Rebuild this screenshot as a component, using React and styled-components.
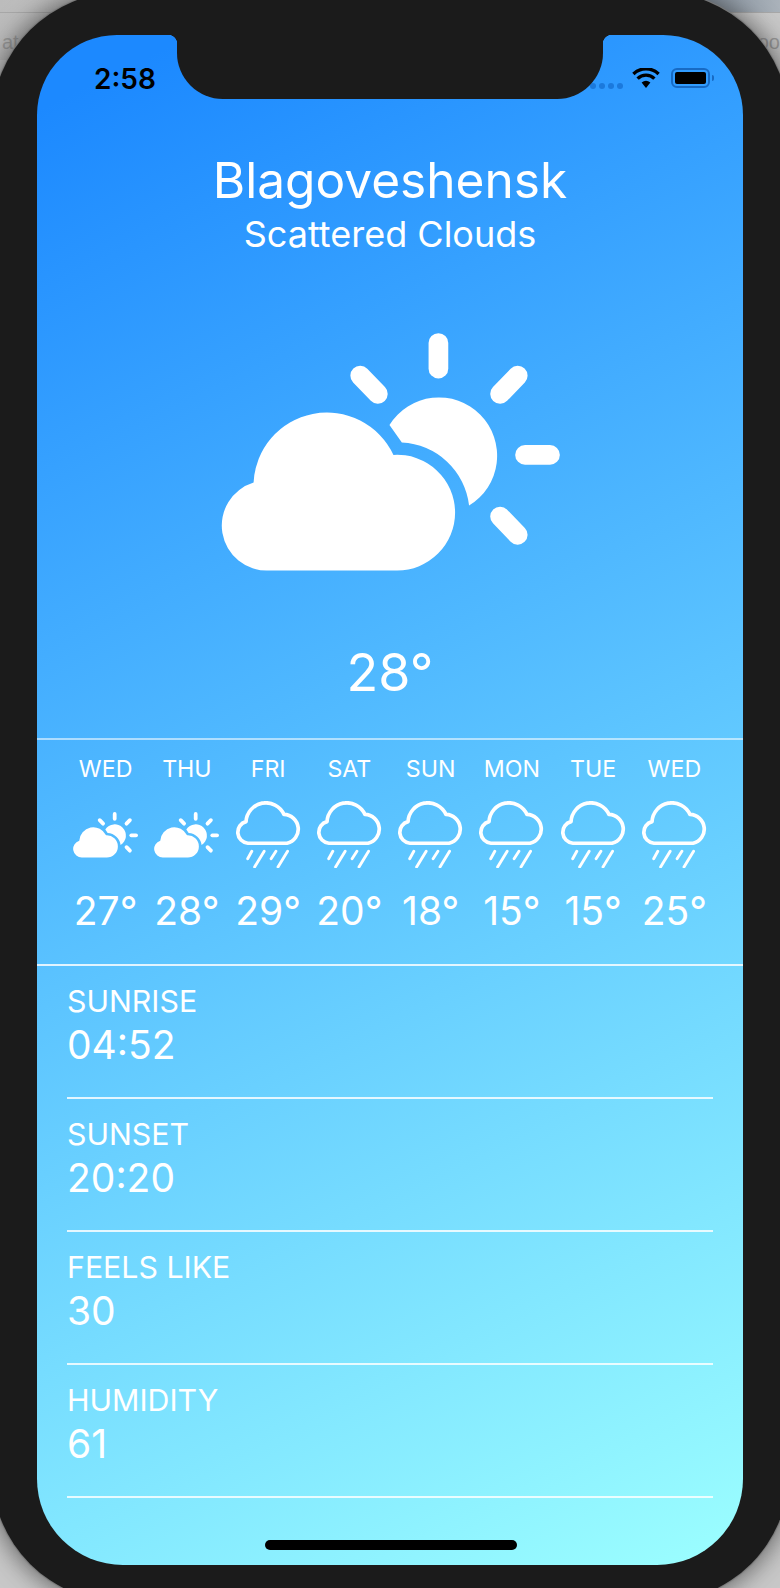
import React from "react";
import styled, { createGlobalStyle } from "styled-components";

const Global = createGlobalStyle`
  html, body { margin: 0; padding: 0; background: #c8c8c8; }
  body { font-family: Inter, "Noto Sans", sans-serif; }
`;

const Page = styled.div`
  position: relative;
  width: 780px;
  height: 1588px;
  overflow: hidden;
  display: flex;
  justify-content: center;
  align-items: flex-start;
  background: #c8c8c8;
`;

const Backdrop = styled.div`
  position: absolute;
  inset: 0 0 auto 0;
  height: 60px;
  display: flex;
  justify-content: space-between;
  align-items: flex-end;
  padding: 0 0 8px 2px;
  box-sizing: border-box;
  color: #9a9a9a;
  font: 400 20px/1 "Liberation Sans", sans-serif;
  background:
    linear-gradient(#a8a8a8, #a8a8a8) 0 12px / 100% 1px no-repeat,
    linear-gradient(90deg, transparent 78%, #7f8c9a 88%, #aab2ba 100%) 0 0 / 100% 12px no-repeat,
    linear-gradient(90deg, #bcbcbc, #d6d6d6 50%, #c8c8c8);
`;

const Frame = styled.div`
  position: relative;
  flex: 0 0 auto;
  width: 797px;
  height: 1610px;
  margin-top: -8.5px;
  padding: 43.5px 45.5px 0;
  box-sizing: border-box;
  background: #1b1b1b;
  border-radius: 130px;
  box-shadow: 0 0 1px 1px #777, 0 0 24px 4px rgba(40, 40, 40, 0.6);
`;

const Screen = styled.div`
  position: relative;
  height: 1530px;
  overflow: hidden;
  display: flex;
  flex-direction: column;
  color: #fff;
  background: linear-gradient(154deg, #1c89ff 4%, #9cffff 100%);
  border-radius: 80px 80px 86px 86px;
`;

const Notch = styled.div`
  position: absolute;
  top: 0;
  left: 140px;
  width: 426px;
  height: 64px;
  background: #1b1b1b;
  border-radius: 0 0 46px 46px;
  &::before, &::after {
    content: "";
    position: absolute;
    top: 0;
    width: 9px;
    height: 9px;
  }
  &::before {
    left: -9px;
    background: radial-gradient(circle at 0 100%, transparent 9px, #1b1b1b 9.5px);
  }
  &::after {
    right: -9px;
    background: radial-gradient(circle at 100% 100%, transparent 9px, #1b1b1b 9.5px);
  }
`;

const StatusBar = styled.div`
  height: 64px;
  flex: 0 0 auto;
  padding: 34px 33px 0 57px;
  box-sizing: border-box;
  display: flex;
  align-items: flex-start;
  justify-content: space-between;
`;

const Clock = styled.span`
  color: #000;
  font-size: 28px;
  font-weight: 600;
  line-height: 20px;
`;

const StatusIcons = styled.div`
  display: flex;
  align-items: flex-start;
  gap: 11px;
  margin-top: -1px;
`;

const Dots = styled.div`
  display: flex;
  gap: 3px;
  margin-top: 15px;
  margin-right: -2px;
`;

const Dot = styled.i`
  width: 6px;
  height: 6px;
  border-radius: 50%;
  background: #1b79dc;
`;

const Battery = styled.div`
  position: relative;
  width: 39px;
  height: 20px;
  box-sizing: border-box;
  border: 2px solid #176ac4;
  border-radius: 6px;
  padding: 2px;
  &::before {
    content: "";
    display: block;
    height: 100%;
    background: #000;
    border-radius: 2px;
  }
  &::after {
    content: "";
    position: absolute;
    right: -6px;
    top: 5px;
    width: 2px;
    height: 6px;
    background: #176ac4;
    border-radius: 0 3px 3px 0;
  }
`;

const City = styled.h1`
  margin: 52px 0 0;
  text-align: center;
  font-size: 49.6px;
  font-weight: 400;
  line-height: 58px;
`;

const Condition = styled.p`
  margin: 4px 0 0;
  text-align: center;
  font-size: 36px;
  font-weight: 400;
  line-height: 42px;
`;

const Hero = styled.div`
  margin-top: 78px;
  display: flex;
  justify-content: center;
`;

const Current = styled.div`
  margin-top: 70px;
  text-align: center;
  font-size: 52px;
  font-weight: 400;
  line-height: 64px;
`;

const Forecast = styled.div`
  margin-top: 33px;
  height: 228px;
  box-sizing: border-box;
  padding: 0 28px;
  display: grid;
  grid-template-columns: repeat(8, 1fr);
  border-top: 2px solid rgba(255, 255, 255, 0.55);
  border-bottom: 2px solid rgba(255, 255, 255, 0.82);
`;

const Day = styled.div`
  display: flex;
  flex-direction: column;
  align-items: center;
`;

const DayName = styled.div`
  margin-top: 15px;
  font-size: 23.2px;
  line-height: 28px;
`;

const DayIcon = styled.div`
  height: 66px;
  margin-top: 19px;
  display: flex;
  align-items: center;
  justify-content: center;
`;

const DayTemp = styled.div`
  margin-top: 18px;
  font-size: 39px;
  line-height: 50px;
  white-space: nowrap;
`;

const Details = styled.div`
  padding: 0 30px;
`;

const Detail = styled.div`
  height: 133px;
  box-sizing: border-box;
  padding-top: 15px;
  border-bottom: 2px solid rgba(255, 255, 255, 0.82);
`;

const DetailLabel = styled.div`
  font-size: 30.3px;
  line-height: 41px;
`;

const DetailValue = styled.div`
  font-size: 39px;
  line-height: 46px;
`;

const HomeBar = styled.div`
  position: absolute;
  left: 227.5px;
  bottom: 15px;
  width: 252px;
  height: 10px;
  border-radius: 5px;
  background: #000;
`;

const CLOUD = "M68.3 250.7H196.7A58 58 0 0 0 255 192.7A58 58 0 0 0 193.3 135A73.5 73.5 0 0 0 53.3 162.7A45 45 0 0 0 68.3 250.7Z";
const SUN = "M189.3 105A58.3 58.3 0 1 1 269 185.7A71 71 0 0 0 201.7 122.7Z";
const RAYS = [
  [238.3, 23, 238.3, 48.7],
  [160, 55.7, 177.7, 74],
  [317.7, 55.7, 300, 74],
  [325, 135, 350, 135],
  [300, 196.7, 317.7, 215],
];

const PartlyCloudy = ({ width }) => (
  <svg width={width} viewBox="20.67 13 339.33 238" fill="#fff" style={{ display: "block" }}>
    <path d={CLOUD} />
    <path d={SUN} />
    {RAYS.map(([x1, y1, x2, y2]) => (
      <line key={x1 + "," + y1} x1={x1} y1={y1} x2={x2} y2={y2} stroke="#fff" strokeWidth="19.7" strokeLinecap="round" />
    ))}
  </svg>
);

const Rain = () => (
  <svg width="67" height="67" viewBox="0 0 65 65" fill="none" stroke="#fff" strokeLinecap="round" style={{ display: "block" }}>
    <path d="M12.5 41H50.5A14.2 14.2 0 0 0 47.5 13A19.3 19.3 0 0 0 10.7 20A10.7 10.7 0 0 0 12.5 41Z" strokeWidth="3.6" strokeLinejoin="round" />
    <path d="M12.3 56L16.3 48.7M19 64L28.3 48.7M35 56L39.7 48.7M41.7 64L51 48.7" strokeWidth="2.8" />
  </svg>
);

const Wifi = () => (
  <svg width="28" height="20" viewBox="0 0 28 20" style={{ display: "block" }}>
    <path d="M14 20L9.6 14.6A7 7 0 0 1 18.4 14.6Z" fill="#000" />
    <path d="M5.6 10.6A12 12 0 0 1 22.4 10.6" fill="none" stroke="#000" strokeWidth="3.4" />
    <path d="M1.4 5.9A18.4 18.4 0 0 1 26.6 5.9" fill="none" stroke="#000" strokeWidth="3.4" />
  </svg>
);

const days = [
  ["WED", "sun", "27°"],
  ["THU", "sun", "28°"],
  ["FRI", "rain", "29°"],
  ["SAT", "rain", "20°"],
  ["SUN", "rain", "18°"],
  ["MON", "rain", "15°"],
  ["TUE", "rain", "15°"],
  ["WED", "rain", "25°"],
];

const details = [
  ["SUNRISE", "04:52"],
  ["SUNSET", "20:20"],
  ["FEELS LIKE", "30"],
  ["HUMIDITY", "61"],
];

export default function App() {
  return (
    <Page>
      <Global />
      <Backdrop>
        <span>at</span>
        <span>oo</span>
      </Backdrop>
      <Frame>
        <Screen>
          <StatusBar>
            <Clock>2:58</Clock>
            <StatusIcons>
              <Dots>
                <Dot />
                <Dot />
                <Dot />
                <Dot />
              </Dots>
              <Wifi />
              <Battery />
            </StatusIcons>
          </StatusBar>
          <Notch />
          <City>Blagoveshensk</City>
          <Condition>Scattered Clouds</Condition>
          <Hero>
            <PartlyCloudy width={339} />
          </Hero>
          <Current>28°</Current>
          <Forecast>
            {days.map(([name, kind, temp], i) => (
              <Day key={i}>
                <DayName>{name}</DayName>
                <DayIcon>{kind === "sun" ? <PartlyCloudy width={65} /> : <Rain />}</DayIcon>
                <DayTemp>{temp}</DayTemp>
              </Day>
            ))}
          </Forecast>
          <Details>
            {details.map(([label, value]) => (
              <Detail key={label}>
                <DetailLabel>{label}</DetailLabel>
                <DetailValue>{value}</DetailValue>
              </Detail>
            ))}
          </Details>
          <HomeBar />
        </Screen>
      </Frame>
    </Page>
  );
}
